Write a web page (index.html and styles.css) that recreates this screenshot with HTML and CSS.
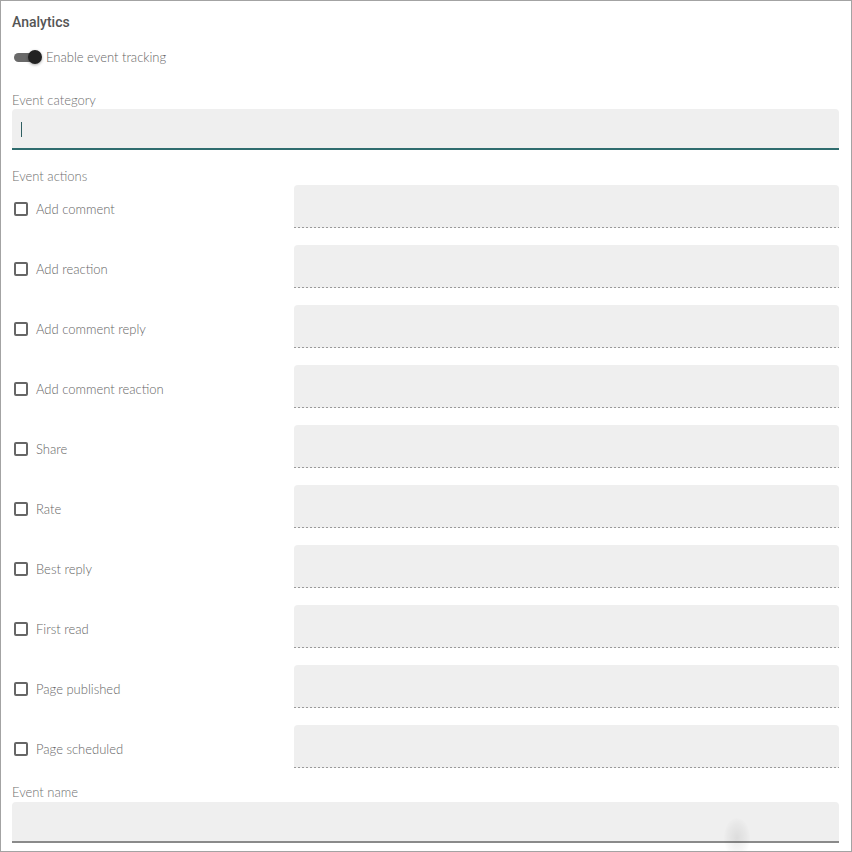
FILE: index.html
```html
<!DOCTYPE html>
<html>
<head>
<meta charset="utf-8">
<link rel="stylesheet" href="styles.css">
</head>
<body>
<div class="panel">
  <div class="title">Analytics</div>
  <div class="toggle-row">
    <span class="toggle"><span class="track"></span><span class="knob"></span></span>
    <span class="toggle-label">Enable event tracking</span>
  </div>
  <div class="label label-category">Event category</div>
  <div class="field field-focus"><span class="caret"></span></div>
  <div class="label label-actions">Event actions</div>
  <div class="actions">
    <div class="check"><span class="box"></span><span>Add comment</span></div><div class="field field-dotted"></div>
    <div class="check"><span class="box"></span><span>Add reaction</span></div><div class="field field-dotted"></div>
    <div class="check"><span class="box"></span><span>Add comment reply</span></div><div class="field field-dotted"></div>
    <div class="check"><span class="box"></span><span>Add comment reaction</span></div><div class="field field-dotted"></div>
    <div class="check"><span class="box"></span><span>Share</span></div><div class="field field-dotted"></div>
    <div class="check"><span class="box"></span><span>Rate</span></div><div class="field field-dotted"></div>
    <div class="check"><span class="box"></span><span>Best reply</span></div><div class="field field-dotted"></div>
    <div class="check"><span class="box"></span><span>First read</span></div><div class="field field-dotted"></div>
    <div class="check"><span class="box"></span><span>Page published</span></div><div class="field field-dotted"></div>
    <div class="check"><span class="box"></span><span>Page scheduled</span></div><div class="field field-dotted"></div>
  </div>
  <div class="label label-name">Event name</div>
  <div class="field field-plain"><span class="ripple"></span></div>
</div>
</body>
</html>
```
FILE: styles.css
```css
* { box-sizing: border-box; }
html, body { margin: 0; padding: 0; background: #fff; }
body { font-family: Lato, "Open Sans", sans-serif; color: #666; }
.panel {
  width: 852px;
  height: 852px;
  border: 1px solid #a3a3a3;
  padding: 10px 12px 0 11px;
  overflow: hidden;
}
.title {
  height: 22px;
  line-height: 22px;
  font-family: Roboto, sans-serif;
  font-weight: 500;
  font-size: 14px;
  color: #555;
}
.toggle-row {
  margin-top: 14px;
  height: 20px;
  display: flex;
  align-items: center;
  gap: 8px;
  padding-left: 2px;
  font-size: 13px;
  font-weight: 300;
  color: #666;
}
.toggle { position: relative; width: 24px; height: 14px; display: inline-block; }
.track {
  position: absolute; left: 0; top: 3px; width: 24px; height: 9px;
  background: #6a6a6a; border-radius: 5px;
}
.knob {
  position: absolute; left: 14px; top: 0; width: 14px; height: 14px;
  background: #222; border-radius: 50%;
  box-shadow: 0 1px 3px rgba(0,0,0,0.35);
}
.label {
  height: 16px;
  line-height: 16px;
  font-size: 13px;
  font-weight: 300;
  color: #6f6f6f;
}
.label-category { margin-top: 25px; }
.label-actions { margin-top: 18px; }
.label-name { margin-top: 17px; }
.field {
  background: #efefef;
  border-radius: 4px 4px 0 0;
  position: relative;
}
.field-focus {
  margin-top: 1px;
  height: 41px;
  border-bottom: 2px solid #2f6c6e;
}
.caret {
  position: absolute; left: 9px; top: 13px;
  width: 1px; height: 15px; background: #2f5f62;
}
.actions {
  margin-top: 1px;
  display: grid;
  grid-template-columns: 282px 1fr;
  grid-auto-rows: 42px;
  row-gap: 18px;
}
.check {
  display: flex;
  align-items: center;
  gap: 8px;
  height: 16px;
  margin-top: 16px;
  padding-left: 2px;
  font-size: 13px;
  font-weight: 300;
  color: #666;
}
.box {
  width: 14px; height: 14px;
  border: 2px solid #666;
  border-radius: 2px;
  flex: none;
}
.field-dotted {
  height: 43px;
  background-color: #efefef;
  background-image: repeating-linear-gradient(to right, #9a9a9a 0 2px, transparent 2px 4px);
  background-size: 100% 1px;
  background-position: left bottom;
  background-repeat: no-repeat;
}
.field-plain {
  margin-top: 2px;
  height: 41px;
  border-bottom: 2px solid #8a8a8a;
  overflow: visible;
}
.ripple {
  position: absolute;
  left: 712px; top: 16px;
  width: 26px; height: 40px;
  border-radius: 50%;
  background: radial-gradient(ellipse at center, rgba(0,0,0,0.08) 0%, rgba(0,0,0,0.03) 50%, rgba(0,0,0,0) 75%);
}
```
